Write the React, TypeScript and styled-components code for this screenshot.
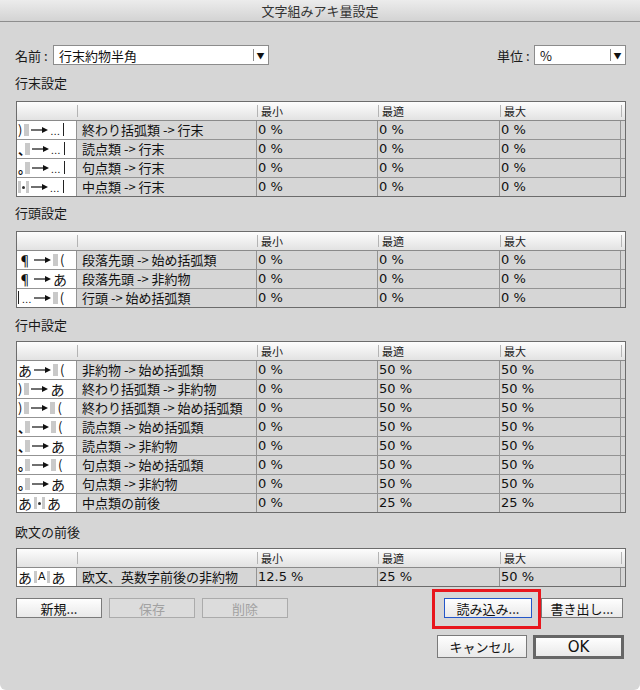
import React from "react";
import styled, { createGlobalStyle, css } from "styled-components";

const jp = `"Noto Sans CJK JP", "Noto Sans", sans-serif`;
const num = `"DejaVu Sans", "Noto Sans CJK JP", sans-serif`;

const GlobalStyle = createGlobalStyle`
  html, body {
    margin: 0;
    padding: 0;
    background: #ffffff;
  }
  body {
    width: 640px;
    height: 690px;
    overflow: hidden;
    font-family: ${jp};
  }
`;

const Dialog = styled.div`
  width: 640px;
  height: 690px;
  background: #d6d6d6;
  border-radius: 0 0 6px 6px;
  display: flex;
  flex-direction: column;
`;

const TitleBar = styled.div`
  height: 21px;
  border-bottom: 1px solid #8e8e8e;
  background: linear-gradient(#ececec, #d3d3d3);
  display: flex;
  align-items: center;
  justify-content: center;
  font-size: 13px;
  color: #333;
`;

const Body = styled.div`
  padding: 23px 14px 0 16px;
  display: flex;
  flex-direction: column;
`;

const TopRow = styled.div`
  display: flex;
  align-items: center;
  height: 20px;
`;

const FieldLabel = styled.div<{ $w: number; $push?: boolean }>`
  width: ${(p) => p.$w}px;
  margin-left: ${(p) => (p.$push ? "auto" : "-1px")};
  font-size: 13px;
  color: #1a1a1a;
  white-space: nowrap;
`;

const Select = styled.div<{ $w: number }>`
  width: ${(p) => p.$w}px;
  height: 20px;
  box-sizing: border-box;
  background: #fff;
  border: 1px solid #8c8c8c;
  display: flex;
  align-items: center;
  font-size: 13px;
  color: #111;
`;

const SelectText = styled.span`
  flex: 1;
  padding-left: 5px;
`;

const SelectArrow = styled.span`
  width: 15px;
  height: 100%;
  position: relative;
  display: flex;
  align-items: center;
  justify-content: center;
  font-size: 8px;
  color: #111;
  &::before {
    content: "";
    position: absolute;
    left: 0;
    top: 3px;
    height: 12px;
    width: 1px;
    background: #8a8a8a;
  }
`;

const SectionLabel = styled.div<{ $mt: number }>`
  margin-top: ${(p) => p.$mt}px;
  margin-left: -1px;
  height: 18px;
  line-height: 18px;
  font-size: 13px;
  color: #1a1a1a;
`;

const Table = styled.div<{ $mt: number }>`
  margin-top: ${(p) => p.$mt}px;
  border: 1px solid #6c6c6c;
  display: flex;
  flex-direction: column;
`;

const cols = "60px 180px 121px 122px 121px 1fr";

const HeadRow = styled.div`
  display: grid;
  grid-template-columns: ${cols};
  height: 19px;
  box-sizing: border-box;
  border-bottom: 1px solid #8a8a8a;
  background: linear-gradient(#fdfdfd, #e2e2e2);
`;

const HeadCell = styled.div<{ $sep?: boolean }>`
  position: relative;
  font-size: 11px;
  line-height: 18px;
  padding-left: 4px;
  color: #222;
  ${(p) =>
    p.$sep &&
    css`
      &::before {
        content: "";
        position: absolute;
        left: 0;
        top: 3px;
        height: 12px;
        width: 1px;
        background: #b4b4b4;
      }
    `}
`;

const Row = styled.div`
  display: grid;
  grid-template-columns: ${cols};
  height: 19px;
  box-sizing: border-box;
  border-bottom: 1px solid #939393;
  &:last-child {
    height: 18px;
    border-bottom: none;
  }
`;

const Cell = styled.div<{ $num?: boolean; $last?: boolean }>`
  box-sizing: border-box;
  border-right: ${(p) => (p.$last ? "none" : "1px solid #939393")};
  font-family: ${(p) => (p.$num ? num : jp)};
  font-size: 13px;
  line-height: 18px;
  padding-left: ${(p) => (p.$num ? 1 : 5)}px;
  color: #111;
  white-space: nowrap;
  overflow: hidden;
`;

const IconCell = styled.div`
  box-sizing: border-box;
  border-right: 1px solid #939393;
  background: #fff;
  display: flex;
  align-items: center;
  padding-left: 1px;
  gap: 2px;
  font-size: 14px;
  color: #111;
  white-space: nowrap;
  overflow: hidden;
`;

const Glyph = styled.span<{ $size?: number; $narrow?: boolean }>`
  font-size: ${(p) => p.$size ?? 14}px;
  line-height: 18px;
  ${(p) =>
    p.$narrow &&
    css`
      display: inline-block;
      width: 5px;
      overflow: visible;
      font-weight: 700;
    `}
`;

const Block = styled.span<{ $w?: number }>`
  display: inline-block;
  width: ${(p) => p.$w ?? 5}px;
  height: 12px;
  background: #c9c9c9;
`;

const Dots = styled.span`
  display: inline-flex;
  align-items: flex-end;
  gap: 3px;
  height: 12px;
  font-size: 10px;
  line-height: 10px;
  letter-spacing: 0.5px;
`;

const VBar = styled.span`
  display: inline-block;
  width: 1px;
  height: 13px;
  background: #222;
`;

const Dot = styled.span`
  display: inline-block;
  width: 3px;
  height: 3px;
  border-radius: 50%;
  background: #333;
  margin: 0 -1px;
`;

const BoxA = styled.span`
  font-family: ${num};
  font-size: 11px;
  line-height: 12px;
  margin: 0 -1px;
`;

const Buttons = styled.div<{ $mt: number }>`
  margin-top: ${(p) => p.$mt}px;
  display: flex;
  align-items: center;
`;

const Group = styled.div<{ $gap: number; $push?: boolean; $mr?: number }>`
  display: flex;
  gap: ${(p) => p.$gap}px;
  margin-left: ${(p) => (p.$push ? "auto" : "0")};
  margin-right: ${(p) => p.$mr ?? 0}px;
`;

const Button = styled.button<{
  $w: number;
  $h?: number;
  $off?: boolean;
  $focus?: boolean;
  $main?: boolean;
}>`
  width: ${(p) => p.$w}px;
  height: ${(p) => p.$h ?? 20}px;
  box-sizing: border-box;
  padding: 0;
  margin: 0;
  font-family: ${jp};
  font-size: 13px;
  color: #111;
  border: 1px solid #7a7a7a;
  border-radius: 0;
  background: linear-gradient(#fefefe, #e9e9e9);
  ${(p) =>
    p.$off &&
    css`
      color: #a2a2a2;
      border-color: #ababab;
      background: #dcdcdc;
    `}
  ${(p) =>
    p.$focus &&
    css`
      border-color: #2356c9;
    `}
  ${(p) =>
    p.$main &&
    css`
      border: 3px solid #666;
      font-family: ${num};
      font-size: 15px;
    `}
`;

const Mark = styled.div`
  position: relative;
  display: flex;
`;

const Highlight = styled.div`
  position: absolute;
  left: -12px;
  top: -9px;
  width: 109px;
  height: 40px;
  box-sizing: border-box;
  border: 3px solid #e8161d;
  pointer-events: none;
`;

function Arrow() {
  return (
    <svg width="17" height="8" viewBox="0 0 17 8">
      <line x1="0" y1="4" x2="13" y2="4" stroke="#111" strokeWidth="1.2" />
      <polygon points="11,1 17,4 11,7" fill="#111" />
    </svg>
  );
}

function Icon({ toks }: { toks: string[] }) {
  return (
    <IconCell>
      {toks.map((t, i) => {
        switch (t) {
          case "B":
            return <Block key={i} />;
          case "b":
            return <Block key={i} $w={3} />;
          case "R":
            return <Arrow key={i} />;
          case "E":
            return (
              <Dots key={i}>
                ...
                <VBar />
              </Dots>
            );
          case "L":
            return (
              <Dots key={i}>
                <VBar />
                ...
              </Dots>
            );
          case "D":
            return <Dot key={i} />;
          case "A":
            return <BoxA key={i}>A</BoxA>;
          case "、":
          case "。":
            return (
              <Glyph key={i} $size={13} $narrow>
                {t}
              </Glyph>
            );
          case ")":
          case "(":
            return (
              <Glyph key={i} $size={13}>
                {t}
              </Glyph>
            );
          default:
            return <Glyph key={i}>{t}</Glyph>;
        }
      })}
    </IconCell>
  );
}

type RowData = { icon: string[]; name: string; v: [string, string, string] };

const z: [string, string, string] = ["0 %", "0 %", "0 %"];
const mid: [string, string, string] = ["0 %", "50 %", "50 %"];

const sections: { title: string; mt: number; gap: number; rows: RowData[] }[] = [
  {
    title: "行末設定",
    mt: 9,
    gap: 9,
    rows: [
      { icon: [")", "B", "R", "E"], name: "終わり括弧類 -> 行末", v: z },
      { icon: ["、", "B", "R", "E"], name: "読点類 -> 行末", v: z },
      { icon: ["。", "B", "R", "E"], name: "句点類 -> 行末", v: z },
      { icon: ["b", "D", "b", "R", "E"], name: "中点類 -> 行末", v: z },
    ],
  },
  {
    title: "行頭設定",
    mt: 7,
    gap: 9,
    rows: [
      { icon: ["¶", "R", "B", "("], name: "段落先頭 -> 始め括弧類", v: z },
      { icon: ["¶", "R", "あ"], name: "段落先頭 -> 非約物", v: z },
      { icon: ["L", "R", "B", "("], name: "行頭 -> 始め括弧類", v: z },
    ],
  },
  {
    title: "行中設定",
    mt: 8,
    gap: 7,
    rows: [
      { icon: ["あ", "R", "B", "("], name: "非約物 -> 始め括弧類", v: mid },
      { icon: [")", "B", "R", "あ"], name: "終わり括弧類 -> 非約物", v: mid },
      { icon: [")", "B", "R", "B", "("], name: "終わり括弧類 -> 始め括弧類", v: mid },
      { icon: ["、", "B", "R", "B", "("], name: "読点類 -> 始め括弧類", v: mid },
      { icon: ["、", "B", "R", "あ"], name: "読点類 -> 非約物", v: mid },
      { icon: ["。", "B", "R", "B", "("], name: "句点類 -> 始め括弧類", v: mid },
      { icon: ["。", "B", "R", "あ"], name: "句点類 -> 非約物", v: mid },
      { icon: ["あ", "b", "D", "b", "あ"], name: "中点類の前後", v: ["0 %", "25 %", "25 %"] },
    ],
  },
  {
    title: "欧文の前後",
    mt: 10,
    gap: 7,
    rows: [
      {
        icon: ["あ", "b", "A", "b", "あ"],
        name: "欧文、英数字前後の非約物",
        v: ["12.5 %", "25 %", "50 %"],
      },
    ],
  },
];

export default function App() {
  return (
    <>
      <GlobalStyle />
      <Dialog>
        <TitleBar>文字組みアキ量設定</TitleBar>
        <Body>
          <TopRow>
            <FieldLabel $w={38}>名前 :</FieldLabel>
            <Select $w={216}>
              <SelectText>行末約物半角</SelectText>
              <SelectArrow>▼</SelectArrow>
            </Select>
            <FieldLabel $w={37} $push>
              単位 :
            </FieldLabel>
            <Select $w={92}>
              <SelectText>%</SelectText>
              <SelectArrow>▼</SelectArrow>
            </Select>
          </TopRow>

          {sections.map((s) => (
            <React.Fragment key={s.title}>
              <SectionLabel $mt={s.mt}>{s.title}</SectionLabel>
              <Table $mt={s.gap}>
                <HeadRow>
                  <HeadCell />
                  <HeadCell $sep />
                  <HeadCell $sep>最小</HeadCell>
                  <HeadCell $sep>最適</HeadCell>
                  <HeadCell $sep>最大</HeadCell>
                  <HeadCell $sep />
                </HeadRow>
                {s.rows.map((r) => (
                  <Row key={r.name}>
                    <Icon toks={r.icon} />
                    <Cell>{r.name}</Cell>
                    <Cell $num>{r.v[0]}</Cell>
                    <Cell $num>{r.v[1]}</Cell>
                    <Cell $num>{r.v[2]}</Cell>
                    <Cell $last />
                  </Row>
                ))}
              </Table>
            </React.Fragment>
          ))}

          <Buttons $mt={11}>
            <Group $gap={7}>
              <Button $w={86}>新規...</Button>
              <Button $w={86} $off>
                保存
              </Button>
              <Button $w={86} $off>
                削除
              </Button>
            </Group>
            <Group $gap={9} $push $mr={3}>
              <Mark>
                <Button $w={88} $focus>
                  読み込み...
                </Button>
                <Highlight />
              </Mark>
              <Button $w={82}>書き出し...</Button>
            </Group>
          </Buttons>

          <Buttons $mt={17}>
            <Group $gap={6} $push $mr={2}>
              <Button $w={90} $h={23}>
                キャンセル
              </Button>
              <Button $w={91} $h={24} $main>
                OK
              </Button>
            </Group>
          </Buttons>
        </Body>
      </Dialog>
    </>
  );
}
